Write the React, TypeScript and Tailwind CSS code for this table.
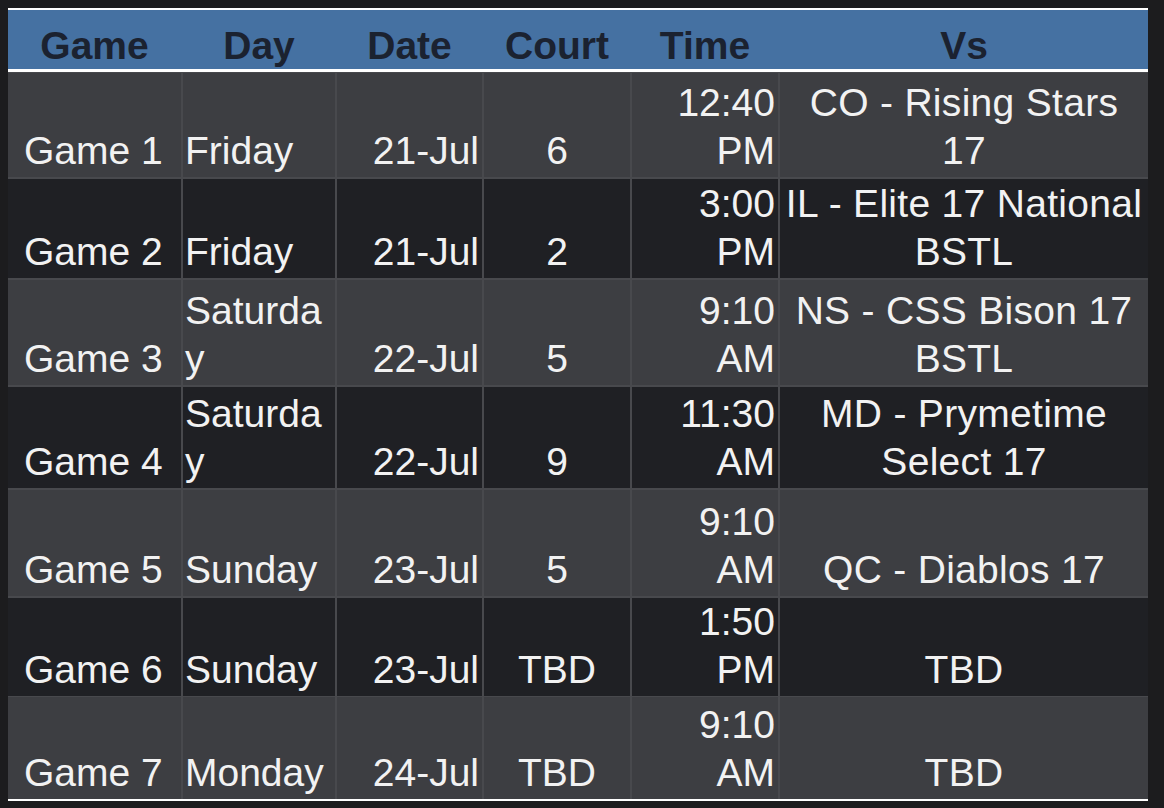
import React from "react";

type Row = {
  game: string;
  day: string[];
  date: string;
  court: string;
  time: string[];
  vs: string[];
  h: number;
};

const rows: Row[] = [
  { game: "Game 1", day: ["Friday"], date: "21-Jul", court: "6", time: ["12:40", "PM"], vs: ["CO - Rising Stars", "17"], h: 104 },
  { game: "Game 2", day: ["Friday"], date: "21-Jul", court: "2", time: ["3:00", "PM"], vs: ["IL - Elite 17 National", "BSTL"], h: 99 },
  { game: "Game 3", day: ["Saturda", "y"], date: "22-Jul", court: "5", time: ["9:10", "AM"], vs: ["NS - CSS Bison 17", "BSTL"], h: 105 },
  { game: "Game 4", day: ["Saturda", "y"], date: "22-Jul", court: "9", time: ["11:30", "AM"], vs: ["MD - Prymetime", "Select 17"], h: 101 },
  { game: "Game 5", day: ["Sunday"], date: "23-Jul", court: "5", time: ["9:10", "AM"], vs: ["QC - Diablos 17"], h: 106 },
  { game: "Game 6", day: ["Sunday"], date: "23-Jul", court: "TBD", time: ["1:50", "PM"], vs: ["TBD"], h: 97 },
  { game: "Game 7", day: ["Monday"], date: "24-Jul", court: "TBD", time: ["9:10", "AM"], vs: ["TBD"], h: 102 },
];

const cols = "grid grid-cols-[173px_152px_145px_146px_146px_368px] gap-x-[2px]";

function Lines({ lines }: { lines: string[] }) {
  return (
    <>
      {lines.map((l, i) => (
        <div key={i} className="whitespace-nowrap">
          {l}
        </div>
      ))}
    </>
  );
}

export default function App() {
  return (
    <div
      className="w-[1164px] h-[808px] bg-[#1c1c1e] pt-[8px] pl-[8px] overflow-hidden"
      style={{ fontFamily: '"Liberation Sans", Arial, Helvetica, sans-serif' }}
    >
      <div className="w-[1140px]">
        {/* header */}
        <div className={`${cols} bg-[#4571a2] border-t-2 border-b-[3px] border-white h-[64px] text-[39px] leading-[48px] font-bold text-[#1b2230]`}>
          {["Game", "Day", "Date", "Court", "Time", "Vs"].map((h) => (
            <div key={h} className="flex items-end justify-center translate-y-[1px]">
              {h}
            </div>
          ))}
        </div>
        {/* body */}
        <div className="flex flex-col gap-y-[2px] bg-[#48494d] pt-[1px] border-b-2 border-white text-[39px] leading-[48px] text-[#f2f2f2]">
          {rows.map((r, i) => {
            const bg = i % 2 === 0 ? "bg-[#3d3e42]" : "bg-[#1f2024]";
            const cell = `${bg} flex flex-col justify-end pb-[2px]`;
            return (
              <div key={r.game} className={cols} style={{ height: r.h }}>
                <div className={`${cell} pl-[16px]`}>
                  <Lines lines={[r.game]} />
                </div>
                <div className={`${cell} pl-[2px]`}>
                  <Lines lines={r.day} />
                </div>
                <div className={`${cell} items-end pr-[3px]`}>
                  <Lines lines={[r.date]} />
                </div>
                <div className={`${cell} items-center`}>
                  <Lines lines={[r.court]} />
                </div>
                <div className={`${cell} items-end pr-[3px]`}>
                  <Lines lines={r.time} />
                </div>
                <div className={`${cell} items-center tracking-[0.3px]`}>
                  <Lines lines={r.vs} />
                </div>
              </div>
            );
          })}
        </div>
      </div>
    </div>
  );
}
